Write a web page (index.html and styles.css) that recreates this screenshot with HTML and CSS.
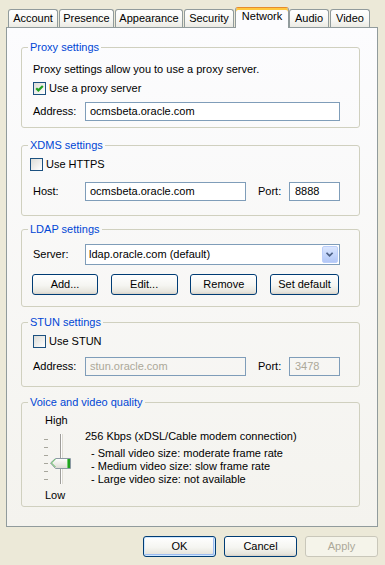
FILE: index.html
```html
<!DOCTYPE html>
<html>
<head>
<meta charset="utf-8">
<title>Network settings</title>
<link rel="stylesheet" href="styles.css">
</head>
<body>
<div class="tabs">
  <div class="tab tab-account">Account</div>
  <div class="tab tab-presence">Presence</div>
  <div class="tab tab-appearance">Appearance</div>
  <div class="tab tab-security">Security</div>
  <div class="tab tab-network active">Network</div>
  <div class="tab tab-audio">Audio</div>
  <div class="tab tab-video">Video</div>
</div>
<div class="panel">
  <fieldset class="group g-proxy">
    <legend>Proxy settings</legend>
    <div class="gbody">
      <p class="desc">Proxy settings allow you to use a proxy server.</p>
      <div class="check"><span class="box"><svg viewBox="0 0 11 11" width="11" height="11"><path d="M2.2 5.2 L4.4 7.4 L8.8 3" fill="none" stroke="#21a121" stroke-width="2.2"/></svg></span>Use a proxy server</div>
      <div class="row"><span class="lbl">Address:</span><span class="input wide">ocmsbeta.oracle.com</span></div>
    </div>
  </fieldset>

  <fieldset class="group g-xdms">
    <legend>XDMS settings</legend>
    <div class="gbody">
      <div class="check shift"><span class="box"></span>Use HTTPS</div>
      <div class="row"><span class="lbl">Host:</span><span class="input host">ocmsbeta.oracle.com</span><span class="plbl">Port:</span><span class="input port">8888</span></div>
    </div>
  </fieldset>

  <fieldset class="group g-ldap">
    <legend>LDAP settings</legend>
    <div class="gbody">
      <div class="row"><span class="lbl">Server:</span>
        <span class="combo"><span class="combo-text">ldap.oracle.com (default)</span><span class="combo-btn"><svg viewBox="0 0 16 17" width="14" height="15"><polyline points="4,6.5 7.5,10 11,6.5" fill="none" stroke="#4d6185" stroke-width="2"/></svg></span></span>
      </div>
      <div class="btnrow">
        <span class="btn b-add">Add...</span>
        <span class="btn b-edit">Edit...</span>
        <span class="btn b-remove">Remove</span>
        <span class="btn b-default">Set default</span>
      </div>
    </div>
  </fieldset>

  <fieldset class="group g-stun">
    <legend>STUN settings</legend>
    <div class="gbody">
      <div class="check"><span class="box"></span>Use STUN</div>
      <div class="row"><span class="lbl">Address:</span><span class="input host disabled">stun.oracle.com</span><span class="plbl">Port:</span><span class="input port disabled">3478</span></div>
    </div>
  </fieldset>

  <fieldset class="group g-voice">
    <legend>Voice and video quality</legend>
    <div class="gbody">
      <div class="vleft">
        <div class="vlabel">High</div>
        <svg class="slider" viewBox="0 0 40 62" width="40" height="62">
          <g stroke="#a7a69c" stroke-width="1">
            <line x1="11" y1="12.5" x2="15" y2="12.5"/>
            <line x1="11" y1="20.5" x2="15" y2="20.5"/>
            <line x1="11" y1="28.5" x2="15" y2="28.5"/>
            <line x1="11" y1="36.5" x2="15" y2="36.5"/>
            <line x1="11" y1="44.5" x2="15" y2="44.5"/>
            <line x1="11" y1="52.5" x2="15" y2="52.5"/>
          </g>
          <line x1="27.5" y1="7" x2="27.5" y2="57" stroke="#9d9c99"/>
          <line x1="28.5" y1="7" x2="28.5" y2="57" stroke="#ffffff"/>
          <line x1="29.5" y1="7" x2="29.5" y2="57" stroke="#dedcd3"/>
          <defs>
            <linearGradient id="thumbg" x1="0" y1="0" x2="0" y2="1">
              <stop offset="0" stop-color="#ffffff"/>
              <stop offset="1" stop-color="#dcdbd4"/>
            </linearGradient>
          </defs>
          <polygon points="17.5,36 22.5,31.5 37.5,31.5 37.5,41.5 22.5,41.5" fill="url(#thumbg)" stroke="#8c9aa4"/>
          <polyline points="22.5,32 18.5,36 22.5,40" fill="none" stroke="#5fc25f" stroke-width="1"/>
          <rect x="34" y="32" width="3" height="9" fill="#21a121"/>
          <rect x="34" y="32" width="1" height="9" fill="#6fd06f"/>
        </svg>
        <div class="vlabel">Low</div>
      </div>
      <div class="vright">
        <div>256 Kbps (xDSL/Cable modem connection)</div>
        <div class="bullets">
          <div>- Small video size: moderate frame rate</div>
          <div>- Medium video size: slow frame rate</div>
          <div>- Large video size: not available</div>
        </div>
      </div>
    </div>
  </fieldset>
</div>
<div class="actions">
  <span class="btn dbtn default">OK</span>
  <span class="btn dbtn">Cancel</span>
  <span class="btn dbtn disabled">Apply</span>
</div>
</body>
</html>
```

FILE: styles.css
```css
* { box-sizing: border-box; }
html, body { margin: 0; padding: 0; }
body {
  width: 385px;
  height: 565px;
  overflow: hidden;
  background: #ece9d8;
  color: #000;
  font-family: "Liberation Sans", Arial, sans-serif;
  font-size: 11px;
  line-height: 13px;
}

/* Tabs */
.tabs {
  display: flex;
  align-items: flex-end;
  height: 27px;
  padding-left: 8px;
}
.tab {
  height: 18px;
  margin-right: 1px;
  padding-top: 2px;
  border: 1px solid #919b9c;
  border-bottom: none;
  border-radius: 3px 3px 0 0;
  background: linear-gradient(#ffffff, #f7f7f4 60%, #ebeae3);
  text-align: center;
  white-space: nowrap;
}
.tab-account { width: 50px; }
.tab-presence { width: 55px; }
.tab-appearance { width: 68px; }
.tab-security { width: 50px; }
.tab-network { width: 54px; }
.tab-audio { width: 40px; }
.tab-video { width: 40px; }
.tab.active {
  height: 21px;
  margin-bottom: -1px;
  margin-right: 0;
  padding-top: 2px;
  position: relative;
  z-index: 1;
  background: #fcfcfe;
  border-top: 1px solid #e68b2c;
  box-shadow: inset 0 2px 0 #ffc73c;
}

/* Panel */
.panel {
  width: 372px;
  height: 500px;
  margin-left: 6px;
  padding: 12px 0 0 14px;
  border: 1px solid #919b9c;
  background: linear-gradient(#fcfcfe, #f4f3ee);
}

.group {
  width: 339px;
  min-width: 0;
  margin: 0;
  padding: 0;
  border: 1px solid #d0d0bf;
  border-radius: 3px;
}
.group legend {
  margin-left: 6px;
  padding: 0 2px;
  color: #0046d5;
  line-height: 14px;
}
.gbody {
  padding: 0 19px 0 11px;
}

.g-proxy .gbody { padding-bottom: 6px; }
.g-xdms { margin-top: 10px; }
.g-xdms .gbody { padding-bottom: 14px; }
.g-ldap { margin-top: 6px; }
.g-ldap .gbody { padding-bottom: 11px; }
.g-stun { margin-top: 8px; }
.g-stun .gbody { padding-bottom: 10px; }
.g-voice { margin-top: 8px; }
.g-voice .gbody { display: flex; padding-bottom: 4px; }

.desc { margin: 9px 0 0; }

.check {
  display: flex;
  align-items: center;
  height: 13px;
  margin-top: 6px;
}
.check.shift { margin-left: -3px; }
.box {
  display: flex;
  align-items: center;
  justify-content: center;
  width: 13px;
  height: 13px;
  margin-right: 3px;
  border: 1px solid #1c5180;
  background: linear-gradient(135deg, #dcdcd7, #ffffff);
}
.box svg { display: block; }

.row {
  display: flex;
  align-items: center;
  margin-top: 7px;
}
.g-xdms .row { margin-top: 11px; }
.g-ldap .row { margin-top: 8px; }
.g-stun .row { margin-top: 9px; }

.lbl { width: 52px; flex: none; }
.plbl { width: 31px; margin-left: 12px; flex: none; }

.input {
  height: 19px;
  padding: 0 4px;
  border: 1px solid #7f9db9;
  background: #fff;
  line-height: 17px;
  white-space: nowrap;
  flex: none;
}
.input.wide { width: 255px; }
.input.host { width: 161px; }
.input.port { width: 51px; padding-left: 5px; }
.input.disabled { background: transparent; color: #aca899; }

.combo {
  display: flex;
  align-items: center;
  width: 255px;
  height: 21px;
  padding-left: 3px;
  border: 1px solid #7f9db9;
  background: #fff;
}
.combo-text { flex: 1; }
.combo-btn {
  display: flex;
  align-items: center;
  justify-content: center;
  width: 16px;
  height: 17px;
  margin-right: 1px;
  border: 1px solid #bccffa;
  border-radius: 2px;
  background: linear-gradient(#dbe6fe, #c2d4fb 60%, #b3c7f6);
}

.btnrow {
  display: flex;
  justify-content: space-between;
  width: 307px;
  margin: 9px 0 0 -1px;
}
.btn {
  display: flex;
  align-items: center;
  justify-content: center;
  height: 21px;
  border: 1px solid #003c74;
  border-radius: 3px;
  background: linear-gradient(#ffffff, #f5f5f1 55%, #e6e4dc 90%, #d6d0c5);
  white-space: nowrap;
}
.b-add { width: 66px; }
.b-edit { width: 67px; }
.b-remove { width: 67px; }
.b-default { width: 69px; }

/* Voice */
.vleft { width: 52px; flex: none; }
.vlabel { padding-left: 12px; }
.vleft .vlabel:first-child { margin-top: 5px; }
.slider { display: block; }
.vright { margin-top: 21px; }
.bullets { margin-top: 4px; padding-left: 6px; }

/* Dialog buttons */
.actions {
  display: flex;
  justify-content: flex-end;
  gap: 8px;
  margin-top: 9px;
  padding-right: 7px;
}
.dbtn { width: 73px; }
.dbtn.default {
  box-shadow: inset 0 0 0 1px #cee7ff, inset -1px -1px 0 1px #9dbcf0;
}
.dbtn.disabled {
  border-color: #c9c7ba;
  background: #f5f4ea;
  color: #aca899;
}
```
